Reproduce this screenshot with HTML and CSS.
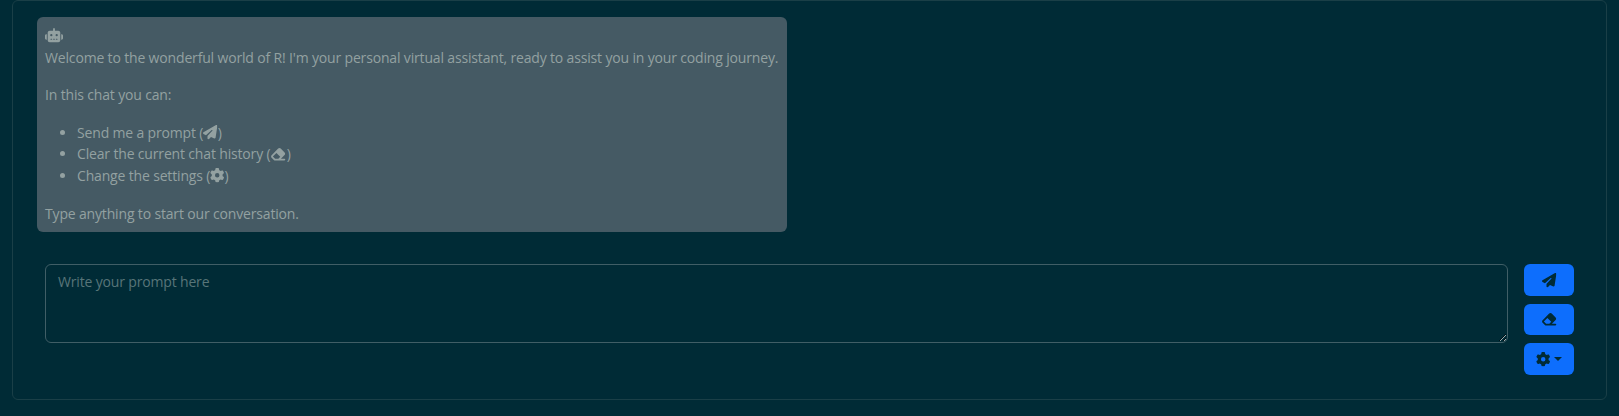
FILE: index.html
```html
<!DOCTYPE html>
<html lang="en">
<head>
<meta charset="utf-8">
<title>Chat</title>
<link rel="stylesheet" href="styles.css">
</head>
<body>
<svg class="sprite" aria-hidden="true">
  <symbol id="robot" viewBox="0 0 640 512"><path d="M320 0c17.700 0 32 14.300 32 32V96H472c39.800 0 72 32.200 72 72V440c0 39.800-32.200 72-72 72H168c-39.800 0-72-32.200-72-72V168c0-39.800 32.200-72 72-72H288V32c0-17.700 14.300-32 32-32zM208 384c-8.800 0-16 7.200-16 16s7.200 16 16 16h32c8.800 0 16-7.200 16-16s-7.200-16-16-16H208zm96 0c-8.800 0-16 7.200-16 16s7.200 16 16 16h32c8.800 0 16-7.200 16-16s-7.200-16-16-16H304zm96 0c-8.800 0-16 7.200-16 16s7.200 16 16 16h32c8.800 0 16-7.200 16-16s-7.200-16-16-16H400zM264 256a40 40 0 1 0 -80 0 40 40 0 1 0 80 0zm152 40a40 40 0 1 0 0-80 40 40 0 1 0 0 80zM48 224H64V416H48c-26.500 0-48-21.500-48-48V272c0-26.500 21.500-48 48-48zm544 0c26.500 0 48 21.500 48 48v96c0 26.500-21.500 48-48 48H576V224h16z"/></symbol>
  <symbol id="plane" viewBox="0 0 512 512"><path d="M498.1 5.6c10.1 7 15.4 19.1 13.5 31.2l-64 416c-1.5 9.7-7.4 18.2-16 23s-18.9 5.4-28 1.6L284 427.7l-68.5 74.1c-8.9 9.7-22.9 12.9-35.2 8.1S160 493.2 160 480V396.4c0-4 1.5-7.8 4.2-10.7L331.8 202.8c5.8-6.3 5.6-16-.4-22s-15.700-6.400-22-.7L106 360.800 17.700 316.600C7.100 311.300 .3 300.700 0 288.900s5.900-22.800 16.100-28.700l448-256c10.700-6.100 23.900-5.500 34 1.400z"/></symbol>
  <symbol id="eraser" viewBox="0 0 576 512"><path d="M290.700 57.400L57.400 290.700c-25 25-25 65.500 0 90.500l80 80c12 12 28.300 18.700 45.300 18.700H288h9.400H512c17.700 0 32-14.300 32-32s-14.300-32-32-32H387.900L518.600 285.300c25-25 25-65.500 0-90.500L381.300 57.400c-25-25-65.500-25-90.500 0zM297.400 416H288l-105.400 0-80-80L227.300 211.300 364.700 348.700 297.400 416z"/></symbol>
  <symbol id="gear" viewBox="0 0 512 512"><path d="M495.9 166.6c3.2 8.7 .5 18.4-6.4 24.6l-43.3 39.4c1.1 8.3 1.7 16.8 1.7 25.4s-.6 17.1-1.7 25.4l43.3 39.4c6.9 6.2 9.6 15.9 6.4 24.6c-4.4 11.9-9.7 23.3-15.8 34.3l-4.7 8.1c-6.6 11-14 21.4-22.1 31.2c-5.9 7.2-15.7 9.6-24.5 6.8l-55.7-17.7c-13.4 10.3-28.2 18.9-44 25.4l-12.5 57.1c-2 9.1-9 16.3-18.2 17.8c-13.8 2.3-28 3.5-42.5 3.5s-28.7-1.2-42.5-3.5c-9.2-1.5-16.2-8.7-18.2-17.8l-12.5-57.1c-15.8-6.5-30.6-15.1-44-25.4L83.1 425.9c-8.8 2.8-18.6 .3-24.5-6.8c-8.1-9.8-15.5-20.2-22.1-31.2l-4.7-8.1c-6.1-11-11.4-22.4-15.8-34.3c-3.2-8.7-.5-18.4 6.4-24.6l43.3-39.4C64.6 273.1 64 264.6 64 256s.6-17.1 1.7-25.4L22.4 191.2c-6.9-6.2-9.6-15.9-6.4-24.6c4.4-11.9 9.7-23.3 15.8-34.3l4.7-8.1c6.6-11 14-21.4 22.1-31.2c5.9-7.2 15.7-9.6 24.5-6.8l55.7 17.7c13.4-10.3 28.2-18.9 44-25.4l12.5-57.1c2-9.1 9-16.3 18.2-17.8C227.3 1.2 241.5 0 256 0s28.7 1.2 42.5 3.5c9.2 1.5 16.2 8.7 18.2 17.8l12.5 57.1c15.8 6.5 30.6 15.1 44 25.4l55.7-17.7c8.8-2.8 18.6-.3 24.5 6.8c8.1 9.8 15.5 20.2 22.1 31.2l4.7 8.1c6.1 11 11.4 22.4 15.8 34.3zM256 336a80 80 0 1 0 0-160 80 80 0 1 0 0 160z"/></symbol>
</svg>
<main class="card">
  <section class="message">
    <div><svg class="icon icon-robot"><use href="#robot"/></svg></div>
    <p>Welcome to the wonderful world of R! I'm your personal virtual assistant, ready to assist you in your coding journey.</p>
    <p>In this chat you can:</p>
    <ul>
      <li>Send me a prompt (<svg class="icon"><use href="#plane"/></svg>)</li>
      <li>Clear the current chat history (<svg class="icon icon-eraser"><use href="#eraser"/></svg>)</li>
      <li>Change the settings (<svg class="icon"><use href="#gear"/></svg>)</li>
    </ul>
    <p>Type anything to start our conversation.</p>
  </section>
  <section class="composer">
    <textarea class="prompt" placeholder="Write your prompt here"></textarea>
    <div class="actions">
      <button class="btn" aria-label="Send"><svg class="icon"><use href="#plane"/></svg></button>
      <button class="btn" aria-label="Clear"><svg class="icon icon-eraser"><use href="#eraser"/></svg></button>
      <button class="btn" aria-label="Settings"><svg class="icon"><use href="#gear"/></svg><span class="caret"></span></button>
    </div>
  </section>
</main>
</body>
</html>
```
FILE: styles.css
```css
* { box-sizing: border-box; }
body {
  margin: 0;
  padding: 0 12px;
  background: #002b36;
  color: #93a1a1;
  font: 14px/21.6px "Open Sans", "Noto Sans", sans-serif;
  letter-spacing: -0.162px;
  color-scheme: dark;
}
.sprite { position: absolute; width: 0; height: 0; }
.card {
  height: 400px;
  padding: 16px 32px 0 24px;
  border: 1px solid #1a3f47;
  border-radius: 6px;
}
.message {
  width: 750px;
  height: 215px;
  padding: 8px;
  border-radius: 6px;
  background: #455a64;
  white-space: nowrap;
}
p { margin: 0 0 16px; }
ul { margin: 0 0 16px; padding-left: 32px; }
.icon {
  width: 14.4px;
  height: 14.4px;
  vertical-align: -1.8px;
  fill: currentColor;
  overflow: visible;
}
.icon-robot { width: 18px; }
.icon-eraser { width: 16.2px; }
.composer {
  display: flex;
  gap: 16px;
  align-items: flex-start;
  padding: 32px 0 0 8px;
}
.prompt {
  flex: 1;
  height: 79px;
  padding: 6px 12px;
  border: 1px solid #405e66;
  border-radius: 6px;
  background: transparent;
  color: #93a1a1;
  font: inherit;
  letter-spacing: inherit;
  resize: both;
}
.prompt::placeholder { color: #587579; opacity: 1; }
.actions { display: grid; gap: 8px; width: 50px; }
.btn {
  display: flex;
  align-items: center;
  justify-content: center;
  height: 31.6px;
  padding: 0;
  border: 0;
  border-radius: 6px;
  background: #0d6efd;
  color: #002b36;
}
.caret {
  margin-left: 4px;
  border: 4.3px solid transparent;
  border-top-color: currentColor;
  border-bottom: 0;
}
```
